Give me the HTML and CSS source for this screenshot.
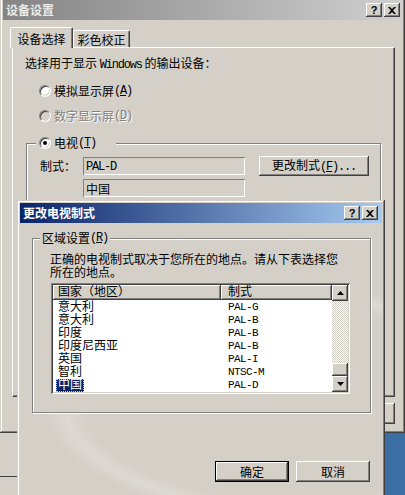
FILE: index.html
```html
<!DOCTYPE html>
<html lang="zh-CN">
<head>
    <meta charset="UTF-8">
    <title>设备设置</title>
    <link rel="stylesheet" href="styles.css">
</head>
<body>
    <div class="desk">
        <div class="back"></div>

        <div class="win main">
            <div class="title inactive">
                <span class="caption">设备设置</span>
                <span class="tbtns">
                    <span class="tbtn">?</span>
                    <span class="tbtn"><svg width="8" height="7" viewBox="0 0 8 7"><path d="M0 0h2l2 2 2-2h2L5 3.5 8 7H6L4 5 2 7H0l3-3.5z"/></svg></span>
                </span>
            </div>
            <div class="tabs">
                <div class="tab on">设备选择</div>
                <div class="tab two">彩色校正</div>
            </div>
            <div class="panel">
                <p class="lead">选择用于显示 <span class="m">Windows</span> 的输出设备：</p>
                <div class="opt first"><span class="radio"></span>模拟显示屏<span class="m">(<u>A</u>)</span></div>
                <div class="opt off"><span class="radio"></span>数字显示屏<span class="m">(<u>D</u>)</span></div>
                <div class="group tv">
                    <div class="legend"><span class="radio dot"></span>电视<span class="m">(<u>T</u>)</span></div>
                    <div class="fmt">
                        <span>制式：</span>
                        <div class="field m">PAL-D</div>
                        <button class="btn wide">更改制式<span class="m">(<u>F</u>)...</span></button>
                        <span></span>
                        <div class="field">中国</div>
                    </div>
                </div>
            </div>
            <div class="winbtns"><button class="btn">取消</button></div>
        </div>

        <div class="win dlg">
            <div class="title active">
                <span class="caption">更改电视制式</span>
                <span class="tbtns">
                    <span class="tbtn">?</span>
                    <span class="tbtn"><svg width="8" height="7" viewBox="0 0 8 7"><path d="M0 0h2l2 2 2-2h2L5 3.5 8 7H6L4 5 2 7H0l3-3.5z"/></svg></span>
                </span>
            </div>
            <div class="group region">
                <div class="legend">区域设置<span class="m">(<u>R</u>)</span></div>
                <p class="desc">正确的电视制式取决于您所在的地点。请从下表选择您所在的地点。</p>
                <div class="list">
                    <div class="lv">
                        <div class="hdr"><span class="c1">国家（地区）</span><span class="c2">制式</span></div>
                        <div class="row"><span class="c1">意大利</span><span class="c2 m">PAL-G</span></div>
                        <div class="row"><span class="c1">意大利</span><span class="c2 m">PAL-B</span></div>
                        <div class="row"><span class="c1">印度</span><span class="c2 m">PAL-B</span></div>
                        <div class="row"><span class="c1">印度尼西亚</span><span class="c2 m">PAL-B</span></div>
                        <div class="row"><span class="c1">英国</span><span class="c2 m">PAL-I</span></div>
                        <div class="row"><span class="c1">智利</span><span class="c2 m">NTSC-M</span></div>
                        <div class="row"><span class="c1"><span class="sel">中国</span></span><span class="c2 m">PAL-D</span></div>
                    </div>
                    <div class="sb">
                        <div class="sbb"><svg width="7" height="4" viewBox="0 0 7 4"><path d="M3.5 0L7 4H0z"/></svg></div>
                        <div class="track"><div class="thumb"></div></div>
                        <div class="sbb"><svg width="7" height="4" viewBox="0 0 7 4"><path d="M0 0h7L3.5 4z"/></svg></div>
                    </div>
                </div>
            </div>
            <div class="actions">
                <button class="btn act def">确定</button>
                <button class="btn act">取消</button>
            </div>
        </div>
    </div>
</body>
</html>
```

FILE: styles.css
```css
body {
    margin: 0;
    background: #3a6ea5;
    font: 12px/14px "Noto Sans CJK SC", sans-serif;
    color: #000;
}
.desk {
    position: relative;
    width: 405px;
    height: 495px;
    overflow: hidden;
}
.m {
    font-family: "Liberation Mono", monospace;
    font-size: 12px;
    letter-spacing: -1.2px;
}

/* windows */
.win {
    position: absolute;
    box-sizing: border-box;
    padding: 3px;
    background: #d4d0c8;
    box-shadow: inset -1px -1px #404040, inset 1px 1px #d4d0c8, inset -2px -2px #808080, inset 2px 2px #fff;
}
.main {
    left: 0;
    top: -3px;
    width: 405px;
    height: 436px;
}
.dlg {
    left: 17px;
    top: 200px;
    width: 368px;
    height: 300px;
    background: radial-gradient(ellipse 260px 120px at 75% 68%, transparent 80%, #dcd9d2 88%, transparent 96%), #d4d0c8;
}
.back {
    position: absolute;
    left: 0;
    top: 433px;
    width: 20px;
    height: 62px;
    background: linear-gradient(#d4d0c8 43px, #404040 43px 44px, #d4d0c8 44px);
}

.title {
    display: flex;
    align-items: center;
    height: 20px;
    padding: 0 2px 0 3px;
    font-weight: bold;
}
.inactive {
    background: linear-gradient(to right, #848484, #cfcfcf);
    color: #ecebe7;
}
.active {
    background: linear-gradient(to right, #0a246a, #a6caf0);
    color: #fff;
}
.dlg .title {
    padding-right: 4px;
}
.caption {
    flex: 1;
}
.tbtns {
    display: flex;
    gap: 2px;
}
.tbtn {
    width: 16px;
    height: 14px;
    display: flex;
    align-items: center;
    justify-content: center;
    background: #d4d0c8;
    box-shadow: inset -1px -1px #404040, inset 1px 1px #fff, inset -2px -2px #808080;
    color: #000;
    font: bold 11px/14px "Liberation Sans", sans-serif;
}

/* tabs */
.tabs {
    display: flex;
    align-items: flex-end;
    height: 20px;
    margin: 7px 0 0 9px;
    position: relative;
    z-index: 1;
}
.tab {
    box-sizing: border-box;
    height: 17px;
    padding-top: 2px;
    display: flex;
    align-items: center;
    justify-content: center;
    background: #d4d0c8;
    border-top: 1px solid #fff;
    border-left: 1px solid #fff;
    border-right: 1px solid #404040;
    border-radius: 2px 2px 0 0;
    box-shadow: inset -1px 0 #808080;
}
.tab.on {
    width: 63px;
    height: 21px;
    margin: 0 0 -1px -2px;
}
.tab.two {
    width: 57px;
}
.panel {
    box-sizing: border-box;
    width: 383px;
    height: 350px;
    margin-left: 9px;
    padding: 8px 0 0 12px;
    border: 1px solid;
    border-color: #fff #404040 #404040 #fff;
    box-shadow: inset -1px -1px #808080;
}
.lead {
    margin: 0;
}
.opt {
    display: flex;
    align-items: center;
    height: 14px;
    margin: 11px 0 0 14px;
}
.opt.first {
    margin-top: 12px;
}
.off {
    color: #808080;
    text-shadow: 1px 1px #fff;
}
.radio {
    position: relative;
    width: 12px;
    height: 12px;
    box-sizing: border-box;
    margin-right: 3px;
    border-radius: 50%;
    border: 1px solid;
    border-color: #808080 #fff #fff #808080;
    background: #fff;
    box-shadow: inset 1px 1px #404040, inset -1px -1px #d4d0c8;
}
.off .radio {
    background: #d4d0c8;
}
.radio.dot::after {
    content: "";
    position: absolute;
    left: 3px;
    top: 3px;
    width: 4px;
    height: 4px;
    border-radius: 50%;
    background: #000;
}

/* group boxes */
.group {
    position: relative;
    box-sizing: border-box;
    border: 1px solid #808080;
    box-shadow: inset 1px 1px #fff, 1px 1px #fff;
}
.legend {
    position: absolute;
    top: -8px;
    display: flex;
    align-items: center;
    height: 14px;
    padding: 0 2px;
    background: #d4d0c8;
}
.tv {
    width: 355px;
    height: 130px;
    margin: 20px 0 0 1px;
    padding: 12px 0 0 13px;
}
.tv .legend {
    left: 9px;
    width: 80px;
    box-sizing: border-box;
    padding-left: 3px;
}
.fmt {
    display: grid;
    grid-template-columns: 43px 162px 124px;
    row-gap: 3px;
    align-items: center;
}
.field {
    box-sizing: border-box;
    height: 18px;
    padding: 1px 3px 0;
    display: flex;
    align-items: center;
    box-shadow: inset 1px 1px #808080, inset -1px -1px #fff;
}
.btn {
    box-sizing: border-box;
    height: 20px;
    padding: 0;
    border: 0;
    background: #d4d0c8;
    color: #000;
    font: inherit;
    box-shadow: inset -1px -1px #404040, inset 1px 1px #fff, inset -2px -2px #808080;
}
.btn.wide {
    width: 110px;
    margin-left: 14px;
}
.winbtns {
    display: flex;
    justify-content: flex-end;
    margin: 6px 7px 0 0;
}
.winbtns .btn {
    width: 75px;
    height: 21px;
}

/* dialog */
.region {
    width: 339px;
    margin: 15px 0 0 12px;
    padding: 13px 0 18px 17px;
    background: #d4d0c8;
}
.region .legend {
    left: 7px;
}
.desc {
    width: 290px;
    margin: 0;
    line-height: 13px;
}
.list {
    display: flex;
    box-sizing: border-box;
    width: 299px;
    height: 111px;
    margin: 5px 0 0 1px;
    padding: 2px;
    background: #fff;
    box-shadow: inset 1px 1px #808080, inset -1px -1px #fff, inset 2px 2px #404040, inset -2px -2px #d4d0c8;
}
.lv {
    flex: 1;
    overflow: hidden;
}
.hdr {
    display: flex;
    height: 15px;
    margin-bottom: 1px;
    font-family: "Liberation Sans", "Noto Sans CJK SC", sans-serif;
}
.hdr span {
    box-sizing: border-box;
    height: 15px;
    line-height: 15px;
    background: #d4d0c8;
    box-shadow: inset -1px -1px #404040, inset 1px 1px #fff, inset -2px -2px #808080;
}
.c1 {
    box-sizing: border-box;
    width: 168px;
    padding-left: 5px;
}
.c2 {
    flex: 1;
    padding-left: 7px;
}
.row {
    display: flex;
    height: 13px;
    line-height: 13px;
    font-family: "Liberation Sans", "Noto Sans CJK SC", sans-serif;
}
.row .m {
    font-family: "Liberation Mono", monospace;
    font-size: 11px;
    letter-spacing: -0.6px;
}
.sel {
    display: inline-block;
    margin-left: -2px;
    padding: 0 2px;
    background: #0a246a;
    color: #fff;
    outline: 1px dotted #d8d8b0;
    outline-offset: -1px;
}
.sb {
    width: 16px;
    display: flex;
    flex-direction: column;
    background: repeating-conic-gradient(#d4d0c8 0 25%, #fff 0 50%) 0 0 / 2px 2px;
}
.sbb, .thumb {
    background: #d4d0c8;
    box-shadow: inset -1px -1px #404040, inset 1px 1px #fff, inset -2px -2px #808080;
}
.sbb {
    height: 16px;
    display: flex;
    align-items: center;
    justify-content: center;
}
.track {
    flex: 1;
    display: flex;
    flex-direction: column;
    justify-content: flex-end;
}
.thumb {
    height: 13px;
}
.actions {
    display: flex;
    justify-content: flex-end;
    gap: 7px;
    margin-top: 48px;
    padding-right: 12px;
}
.act {
    width: 74px;
    height: 21px;
}
.def {
    box-shadow: inset 0 0 0 1px #000, inset -2px -2px #404040, inset 2px 2px #fff, inset -3px -3px #808080;
}
```
